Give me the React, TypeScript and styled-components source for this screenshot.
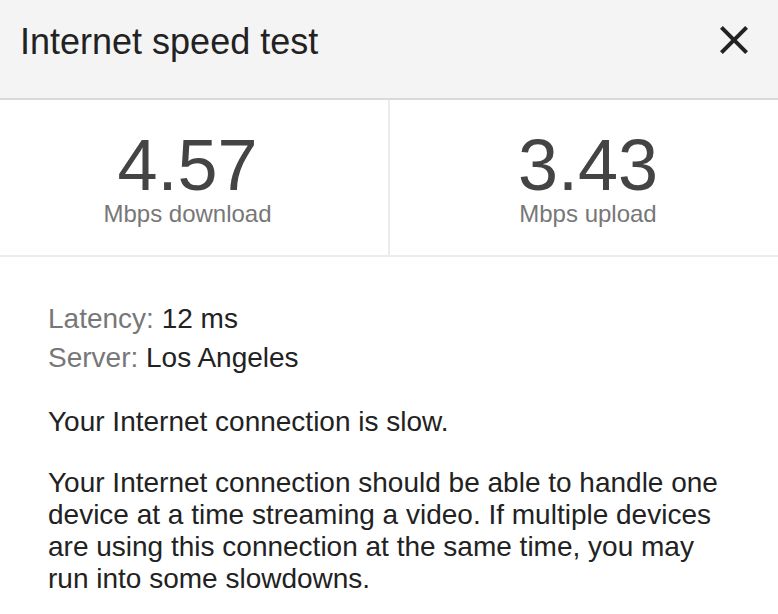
import React from "react";
import styled, { createGlobalStyle } from "styled-components";

const GlobalStyle = createGlobalStyle`
  * {
    box-sizing: border-box;
  }
  body {
    margin: 0;
    background: #fff;
    font-family: "Liberation Sans", Arial, Helvetica, sans-serif;
  }
`;

const stats = [
  { value: "4.57", label: "Mbps download", offset: -13 },
  { value: "3.43", label: "Mbps upload", offset: 8 },
];

const CloseIcon: React.FC = () => (
  <svg width="48" height="48" viewBox="0 0 24 24" aria-hidden="true">
    <path
      fill="#222"
      d="M19 6.41L17.59 5 12 10.59 6.41 5 5 6.41 10.59 12 5 17.59 6.41 19 12 13.41 17.59 19 19 17.59 13.41 12z"
    />
  </svg>
);

const App: React.FC = () => {
  return (
    <>
      <GlobalStyle />
      <Card>
        <Header>
          <Title>Internet speed test</Title>
          <CloseButton aria-label="Close">
            <CloseIcon />
          </CloseButton>
        </Header>
        <Stats>
          {stats.map((stat, i) => (
            <StatCell key={stat.label} $offset={stat.offset} $divider={i === 0}>
              <StatValue>{stat.value}</StatValue>
              <StatLabel>{stat.label}</StatLabel>
            </StatCell>
          ))}
        </Stats>
        <Body>
          <InfoList>
            <InfoRow>
              <InfoKey>Latency: </InfoKey>12 ms
            </InfoRow>
            <InfoRow>
              <InfoKey>Server: </InfoKey>Los Angeles
            </InfoRow>
          </InfoList>
          <Paragraph>Your Internet connection is slow.</Paragraph>
          <Paragraph>
            Your Internet connection should be able to handle one device at a
            time streaming a video. If multiple devices are using this
            connection at the same time, you may run into some slowdowns.
          </Paragraph>
        </Body>
      </Card>
    </>
  );
};

export default App;

const Card = styled.div`
  width: 778px;
  min-height: 614px;
  background: #fff;
  color: #222;
`;

const Header = styled.header`
  display: flex;
  justify-content: space-between;
  align-items: flex-start;
  height: 100px;
  padding: 24px 20px 0 20px;
  background: #f4f4f4;
  border-bottom: 2px solid #dadada;
`;

const Title = styled.h1`
  margin: 0;
  font-size: 36px;
  line-height: 36px;
  font-weight: 400;
  color: #222;
`;

const CloseButton = styled.button`
  display: flex;
  margin: -8px 0 0;
  padding: 0;
  border: none;
  background: none;
  cursor: pointer;
`;

const Stats = styled.section`
  display: grid;
  grid-template-columns: 390px 1fr;
  border-bottom: 2px solid #ececec;
`;

const StatCell = styled.div<{ $offset: number; $divider: boolean }>`
  display: flex;
  flex-direction: column;
  align-items: center;
  padding: 29px 0 29px;
  padding-left: ${(p) => (p.$offset > 0 ? p.$offset : 0)}px;
  padding-right: ${(p) => (p.$offset < 0 ? -p.$offset : 0)}px;
  border-right: ${(p) => (p.$divider ? "2px solid #ececec" : "none")};
`;

const StatValue = styled.div`
  font-size: 72px;
  line-height: 72px;
  color: #444;
`;

const StatLabel = styled.div`
  margin-top: 1px;
  font-size: 24px;
  line-height: 24px;
  color: #777;
`;

const Body = styled.div`
  display: flex;
  flex-direction: column;
  gap: 29px;
  padding: 42px 48px 0;
`;

const InfoList = styled.div`
  display: flex;
  flex-direction: column;
`;

const InfoRow = styled.div`
  font-size: 28px;
  line-height: 39px;
  color: #222;
`;

const InfoKey = styled.span`
  color: #777;
`;

const Paragraph = styled.p`
  margin: 0;
  font-size: 28px;
  line-height: 32px;
  color: #222;
`;
